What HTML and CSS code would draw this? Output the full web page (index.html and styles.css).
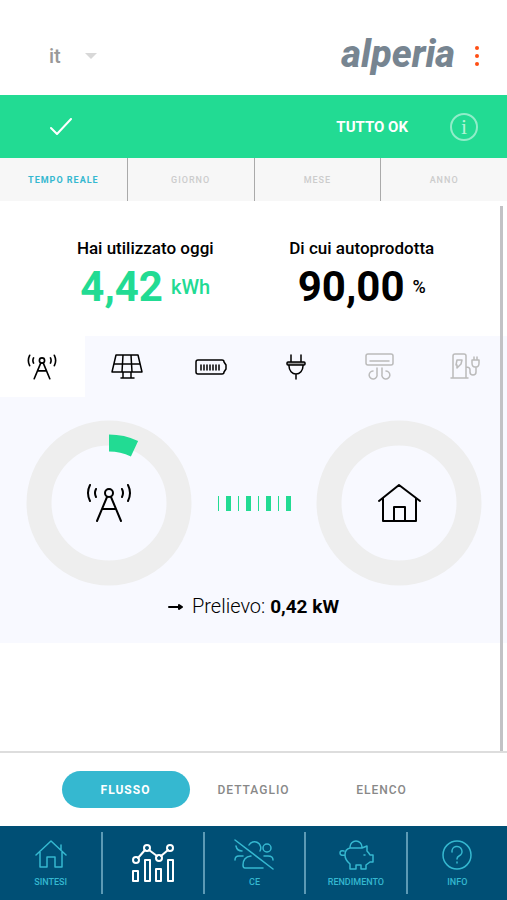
FILE: index.html
```html
<!DOCTYPE html>
<html lang="it">
<head>
  <meta charset="UTF-8">
  <meta name="viewport" content="width=device-width, initial-scale=1">
  <title>Alperia</title>
  <link rel="stylesheet" href="styles.css">
</head>
<body>

  <svg class="defs" aria-hidden="true">
    <symbol id="tower" viewBox="0 0 46 40">
      <circle cx="23" cy="10" r="4"/>
      <path d="M21 14 11 38M25 14l10 24M16 26h14M4 2Q0 10 4 18M42 2q4 8 0 16M10 6q-2 4 0 8M36 6q2 4 0 8"/>
    </symbol>
  </svg>

  <header class="top">
    <button class="lang">it <span class="caret"></span></button>
    <div class="brand">
      <span class="logo">alperia</span>
      <button class="more" aria-label="Menu"><i></i><i></i><i></i></button>
    </div>
  </header>

  <div class="status">
    <svg class="check" width="22" height="18" viewBox="0 0 22 18"><path d="M1 10l6 6L21 1"/></svg>
    <strong>TUTTO OK</strong>
    <button class="info" aria-label="Informazioni">i</button>
  </div>

  <nav class="periods">
    <button class="active">TEMPO REALE</button>
    <button>GIORNO</button>
    <button>MESE</button>
    <button>ANNO</button>
  </nav>

  <main>
    <section class="stats">
      <div>
        <h2>Hai utilizzato oggi</h2>
        <p class="value green">4,42 <small>kWh</small></p>
      </div>
      <div>
        <h2>Di cui autoprodotta</h2>
        <p class="value">90,00 <small class="percent">%</small></p>
      </div>
    </section>

    <section class="flow">
      <div class="sources">
        <button class="active" aria-label="Rete">
          <svg width="30" height="26"><use href="#tower"/></svg>
        </button>
        <button aria-label="Fotovoltaico">
          <svg width="32" height="28" viewBox="0 0 32 28"><path d="M5 2h22l4 17H1zM3 11h26M12 2l-1 17M20 2l1 17M12 19v6M20 19v6M10 25h13"/></svg>
        </button>
        <button aria-label="Batteria">
          <svg width="32" height="18" viewBox="0 0 32 18"><path d="M3 2h24q2 0 2 2l2 3v4l-2 3q0 2-2 2H3q-2 0-2-2V4q0-2 2-2z"/><path d="M6 7v5M9 7v5M12 7v5M15 7v5M18 7v5M21 7v5M24 7v5"/></svg>
        </button>
        <button aria-label="Consumi">
          <svg width="20" height="26" viewBox="0 0 20 26"><path d="M5 1v7M15 1v7M3 11v1a7 8 0 0 0 14 0v-1M10 20v5"/><rect class="fill" x="1" y="8" width="18" height="3" rx="1"/></svg>
        </button>
        <button class="off" aria-label="Climatizzatore">
          <svg width="30" height="28" viewBox="0 0 30 28"><rect x="1" y="1" width="27" height="11" rx="2"/><path d="M5 8h19M12 15v6a4 4 0 1 1-4-3M17 15v6a4 4 0 1 0 4-3"/></svg>
        </button>
        <button class="off" aria-label="Ricarica auto">
          <svg width="30" height="28" viewBox="0 0 30 28"><path d="M3 25V3q0-2 2-2h9q2 0 2 2v22M1 25h17M7 7h5l-1 4-4 4v-3H6zM16 14q4 0 4 3v2q0 3 3 3 3 0 3-3v-5M22 7h7v3q0 4-3 4h-1q-3 0-3-4zM24 7V4M27 7V4"/></svg>
        </button>
      </div>

      <div class="diagram">
        <div class="ring">
          <svg class="dial" viewBox="0 0 166 166">
            <circle class="track" cx="83" cy="83" r="70"/>
            <circle class="share" cx="83" cy="83" r="60" pathLength="100"/>
          </svg>
          <svg class="node" width="46" height="40"><use href="#tower"/></svg>
        </div>
        <div class="dashes">
          <i></i><i></i><i></i><i></i><i></i><i></i><i></i><i></i>
        </div>
        <div class="ring">
          <svg class="dial" viewBox="0 0 166 166">
            <circle class="track" cx="83" cy="83" r="70"/>
          </svg>
          <svg class="node" width="44" height="40" viewBox="0 0 44 40"><path d="M2 18 22 2l21 16M6 15v23h33V15M17 38V24h11v14"/></svg>
        </div>
      </div>

      <p class="reading">
        <svg width="16" height="10" viewBox="0 0 16 10"><path d="M1 5h13M11 3l3 2-3 2z"/></svg>
        <span>Prelievo: <b>0,42 kW</b></span>
      </p>
    </section>
  </main>

  <nav class="views">
    <button class="active">FLUSSO</button>
    <button>DETTAGLIO</button>
    <button>ELENCO</button>
  </nav>

  <nav class="bottom">
    <a href="#">
      <svg width="32" height="32" viewBox="0 0 32 32"><path d="M1 16 16 2l15 14M26 11V6M5 13v15h7V18h8v10h7V13"/></svg>
      SINTESI
    </a>
    <a href="#" class="active" aria-label="Flussi">
      <svg width="44" height="40" viewBox="0 0 44 40"><circle cx="5" cy="17" r="3"/><circle cx="16" cy="5" r="3"/><circle cx="28" cy="15" r="3"/><circle cx="39" cy="5" r="3"/><path d="M7 15l7-8M18 7l8 6M30 13l7-6M2 28h5v10H2zM14 17h5v21h-5zM25 26h5v12h-5zM37 17h5v21h-5z"/></svg>
    </a>
    <a href="#">
      <svg width="42" height="32" viewBox="0 0 42 32"><path d="M2 1l38 29M3 7q1 5 6 5M2 21q0-4 4-4h4M16 6a6 6 0 0 1 11 6M31 17h4q5 0 5 4M30 29H12q-2 0-2-3 0-8 8-9"/><circle cx="34" cy="9" r="4"/></svg>
      CE
    </a>
    <a href="#">
      <svg width="36" height="32" viewBox="0 0 36 32"><path d="M12 8a6 6 0 1 1 12 0M12 9h12l5-2v5q2 2 3 4h3v7h-3l-4 3v4h-5v-4h-5v4h-6v-5q-5-4-5-9 0-6 5-7M7 16q-5 1-5-2t4-2"/><path d="M26 16h1"/></svg>
      RENDIMENTO
    </a>
    <a href="#">
      <svg width="32" height="32" viewBox="0 0 32 32"><circle cx="16" cy="16" r="14"/><path d="M11 13a5 5 0 1 1 7 4q-2 1-2 3M16 23v1"/></svg>
      INFO
    </a>
  </nav>

</body>
</html>
```

FILE: styles.css
```css
* {
  box-sizing: border-box;
}

body {
  margin: 0;
  min-height: 100vh;
  display: flex;
  flex-direction: column;
  font-family: Roboto, "Liberation Sans", sans-serif;
  background: #fff;
  color: #000;
}

button {
  border: 0;
  padding: 0;
  background: none;
  font: inherit;
  color: inherit;
  cursor: pointer;
}

svg {
  fill: none;
  stroke: currentColor;
  stroke-width: 2;
  stroke-linecap: round;
  stroke-linejoin: round;
}

.defs {
  position: absolute;
  width: 0;
  height: 0;
}

/* header */
.top {
  display: flex;
  justify-content: space-between;
  align-items: center;
  height: 95px;
  padding: 16px 28px 0 49px;
}

.lang {
  display: flex;
  align-items: center;
  gap: 24px;
  font-size: 20px;
  font-weight: 500;
  color: #999;
}

.caret {
  border: 6px solid transparent;
  border-top-color: #d8d8d8;
  border-bottom: 0;
}

.brand {
  display: flex;
  align-items: center;
  gap: 20px;
}

.logo {
  font-size: 38px;
  line-height: 48px;
  padding-bottom: 4px;
  font-weight: 800;
  font-style: italic;
  color: #778591;
}

.more {
  display: grid;
  gap: 4px;
}

.more i {
  width: 4px;
  height: 4px;
  border-radius: 50%;
  background: #ff4f14;
}

.status {
  display: flex;
  align-items: center;
  height: 63px;
  padding: 0 29px 0 50px;
  background: #22db93;
  color: #fff;
}

.status strong {
  margin: 0 42px 0 auto;
  font-size: 15px;
}

.info {
  width: 28px;
  height: 28px;
  border: 2px solid #90edc9;
  border-radius: 50%;
  font: 22px/22px "Liberation Serif", serif;
  color: #b5f5d6;
}

.periods {
  display: grid;
  grid-template-columns: repeat(4, 1fr);
  height: 43px;
  background: #f7f7f7;
}

.periods button {
  font-size: 9px;
  font-weight: 500;
  letter-spacing: 1px;
  color: #ccc;
}

.periods button + button {
  border-left: 1px solid #aaa;
}

.periods .active {
  font-weight: 700;
  color: #35b8d0;
}

/* content */
main {
  position: relative;
  flex: 1;
}

/* scroll thumb */
main::after {
  content: "";
  position: absolute;
  top: 5px;
  right: 4px;
  bottom: 0;
  width: 3px;
  background: #c2c2c5;
}

.stats {
  display: grid;
  grid-template-columns: 1fr 1fr;
  height: 135px;
  padding: 36px 37px 0;
  text-align: center;
}

.stats h2 {
  margin: 0;
  font-size: 17px;
  line-height: 22px;
  font-weight: 500;
}

.value {
  display: flex;
  justify-content: center;
  align-items: center;
  gap: 8px;
  margin: 4px 0 0;
  font-size: 42px;
  line-height: 48px;
  font-weight: 700;
}

.value small {
  font-size: 20px;
  font-weight: 500;
}

.value .percent {
  font-size: 18px;
}

.green {
  color: #22db93;
}

.flow {
  height: 307px;
  background: #f8f9ff;
}

.sources {
  display: grid;
  grid-template-columns: repeat(6, 1fr);
  height: 61px;
}

.sources button {
  display: grid;
  place-items: center;
}

.sources svg {
  stroke-width: 1.5;
}

.sources use {
  stroke-width: 2.5;
}

.sources .active {
  background: #fff;
}

.sources .off {
  color: #bbb;
}

.fill {
  fill: #999;
}

.diagram {
  display: flex;
  justify-content: space-between;
  align-items: center;
  padding: 23px 25px 0 26px;
}

.ring {
  display: grid;
  place-items: center;
  width: 166px;
}

.ring svg {
  grid-area: 1 / 1;
}

.dial {
  width: 100%;
  transform: rotate(-90deg);
  stroke-linecap: butt;
}

.track {
  stroke: #eee;
  stroke-width: 25;
}

.share {
  stroke: #22db93;
  stroke-width: 17;
  stroke-dasharray: 7 93;
}

.dashes {
  display: flex;
  align-items: center;
  gap: 7px;
}

.dashes i {
  width: 1px;
  height: 15px;
  background: #22db93;
}

.dashes i:nth-child(even) {
  width: 5px;
}

.reading {
  display: flex;
  justify-content: center;
  align-items: center;
  gap: 8px;
  margin: 8px 0 0;
  font-size: 20px;
  line-height: 24px;
  font-weight: 300;
}

.reading b {
  font-size: 19px;
  font-weight: 700;
}

.reading path {
  fill: currentColor;
}

/* bottom bars */
.views {
  display: grid;
  grid-template-columns: repeat(3, 128px);
  justify-content: center;
  align-content: center;
  height: 75px;
  border-top: 2px solid #ddd;
}

.views button {
  height: 37px;
  border-radius: 19px;
  font-size: 12px;
  font-weight: 500;
  letter-spacing: 1px;
  color: #888;
}

.views .active {
  background: #35b8d0;
  font-weight: 700;
  color: #fff;
}

.bottom {
  display: grid;
  grid-template-columns: repeat(5, 1fr);
  height: 74px;
  padding: 6px 0;
  background: #004f75;
}

.bottom a {
  display: flex;
  flex-direction: column;
  align-items: center;
  justify-content: center;
  gap: 5px;
  font-size: 9px;
  line-height: 12px;
  font-weight: 500;
  text-decoration: none;
  color: #35b8d0;
}

.bottom a + a {
  border-left: 2px solid #5c9ab5;
}

.bottom svg {
  stroke-width: 1.5;
}

.bottom .active {
  color: #fff;
}

.bottom .active svg {
  stroke-width: 2;
}
```
